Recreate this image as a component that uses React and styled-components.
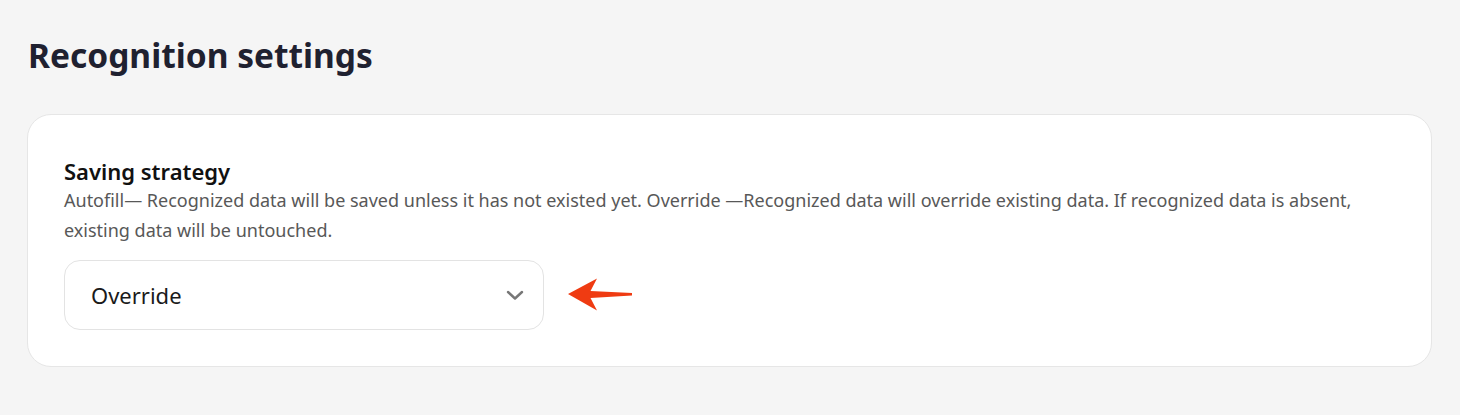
import React from 'react';
import styled, { createGlobalStyle } from 'styled-components';

const GlobalStyle = createGlobalStyle`
    html, body {
        margin: 0;
        padding: 0;
        background: #f5f5f5;
        font-family: 'Noto Sans', 'Open Sans', sans-serif;
    }
`;

const Page = styled.main`
    padding: 28px 28px 48px 27px;
    min-height: 415px;
    box-sizing: border-box;
`;

const Title = styled.h1`
    margin: 0 0 32px 1px;
    font-size: 33.5px;
    line-height: 54px;
    font-weight: 700;
    color: #1f2130;
`;

const Card = styled.section`
    background: #fff;
    border: 1px solid #e6e6e6;
    border-radius: 24px;
    padding: 42px 36px 36px 36px;
`;

const Label = styled.h2`
    margin: 0;
    font-size: 22px;
    line-height: 28px;
    font-weight: 600;
    color: #111;
`;

const Hint = styled.p`
    margin: 0 0 15px;
    font-size: 18px;
    line-height: 30px;
    color: #585858;
`;

const Row = styled.div`
    display: flex;
    align-items: center;
    gap: 24px;
`;

const Select = styled.button`
    display: flex;
    align-items: center;
    justify-content: space-between;
    width: 480px;
    height: 70px;
    box-sizing: border-box;
    padding: 0 19px 0 26px;
    background: #fff;
    border: 1px solid #e3e3e3;
    border-radius: 16px;
    font-family: inherit;
    font-size: 22px;
    color: #1a1a1a;
    cursor: pointer;
`;

const Pointer = () => (
    <svg width="66" height="34" viewBox="0 0 66 34">
        <polygon points="0,16 29,0.5 22.5,13 64,15 64,17.5 22.5,20 29,32.5" fill="#ef3b12" />
    </svg>
);

const Chevron = () => (
    <svg width="18" height="18" viewBox="0 0 18 18">
        <path d="M2 6 L9 12.5 L16 6" fill="none" stroke="#777" strokeWidth="2.4" strokeLinecap="round" strokeLinejoin="round" />
    </svg>
);

const App = () => {
    return (
        <Page>
            <GlobalStyle />
            <Title>Recognition settings</Title>
            <Card>
                <Label>Saving strategy</Label>
                <Hint>
                    Autofill— Recognized data will be saved unless it has not existed yet. Override —Recognized data will override existing data. If recognized data is absent, existing data will be untouched.
                </Hint>
                <Row>
                    <Select>
                        Override
                        <Chevron />
                    </Select>
                    <Pointer />
                </Row>
            </Card>
        </Page>
    );
};

export default App;
